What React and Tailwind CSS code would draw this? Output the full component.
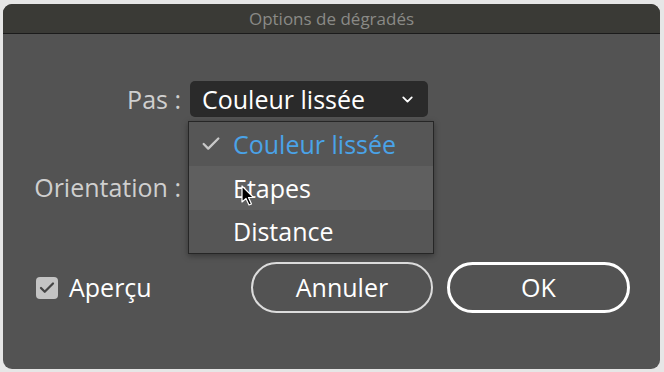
import { Check, ChevronDown } from "lucide-react";

const font = { fontFamily: '"Open Sans", "Lato", "Liberation Sans", sans-serif' };

function Cursor() {
  return (
    <svg className="absolute left-[52px] top-[63px]" width="14" height="22" viewBox="0 0 14 22">
      <path d="M1 1 L1 17 L5 13.5 L8 20 L10.5 19 L7.5 12.5 L12.5 12.5 Z" fill="#000" stroke="#fff" strokeWidth="1.2" strokeLinejoin="round" />
    </svg>
  );
}

export default function App() {
  return (
    <div className="w-[664px] h-[372px] bg-[#e6e6e6] pt-[4px] pl-[3px] pr-[4px] pb-[3px]" style={font}>
      <div className="h-full rounded-[9px] bg-[#535353] overflow-hidden flex flex-col">
        <div className="h-[30px] shrink-0 bg-[#3a3a36] border-b border-[#1b1b1b] flex items-center justify-center text-[17px] text-[#8a8a86]">
          Options de dégradés
        </div>

        <div className="relative flex-1 pt-[47px] leading-none font-medium">
          <div className="flex items-center">
            <div className="w-[178px] text-right text-[25px] text-[#cfcfcf]">Pas :</div>
            <div className="ml-[9px] w-[238px] h-[36px] rounded-[5px] bg-[#2a2a2a] flex items-center justify-between pl-[12px] pr-[12px] text-[25px] text-white">
              <span>Couleur lissée</span>
              <ChevronDown size={17} strokeWidth={2.5} />
            </div>
          </div>

          <div className="flex items-center mt-[52px]">
            <div className="w-[178px] text-right text-[25px] text-[#cfcfcf]">Orientation :</div>
            <div className="ml-[9px] w-[238px] h-[36px] rounded-[5px] bg-[#2a2a2a]" />
          </div>

          <div className="flex items-center mt-[57px] pr-[30px]">
            <div className="flex items-center ml-[33px] gap-[11px]">
              <div className="w-[22px] h-[22px] rounded-[4px] bg-[#c4c4c4] flex items-center justify-center text-[#454545]">
                <Check size={18} strokeWidth={3} />
              </div>
              <span className="text-[25px] text-white">Aperçu</span>
            </div>
            <div className="ml-auto flex gap-[14px]">
              <button className="w-[182px] h-[51px] rounded-full border-2 border-[#dcdcdc] text-[25px] text-white">Annuler</button>
              <button className="w-[183px] h-[51px] rounded-full border-[3px] border-white text-[25px] text-white">OK</button>
            </div>
          </div>

          <div className="absolute left-[185px] top-[87px] w-[246px] bg-[#565656] border border-[#262626] shadow-[0_2px_6px_rgba(0,0,0,0.35)] text-[25px]">
            <div className="h-[44px] flex items-center">
              <span className="w-[44px] flex justify-center text-[#c8c8c8]">
                <Check size={22} strokeWidth={2.5} />
              </span>
              <span className="text-[#4aa3e8]">Couleur lissée</span>
            </div>
            <div className="h-[44px] flex items-center pl-[44px] bg-[#5f5f5f] text-white">Etapes</div>
            <div className="h-[43px] flex items-center pl-[44px] text-white">Distance</div>
            <Cursor />
          </div>
        </div>
      </div>
    </div>
  );
}
